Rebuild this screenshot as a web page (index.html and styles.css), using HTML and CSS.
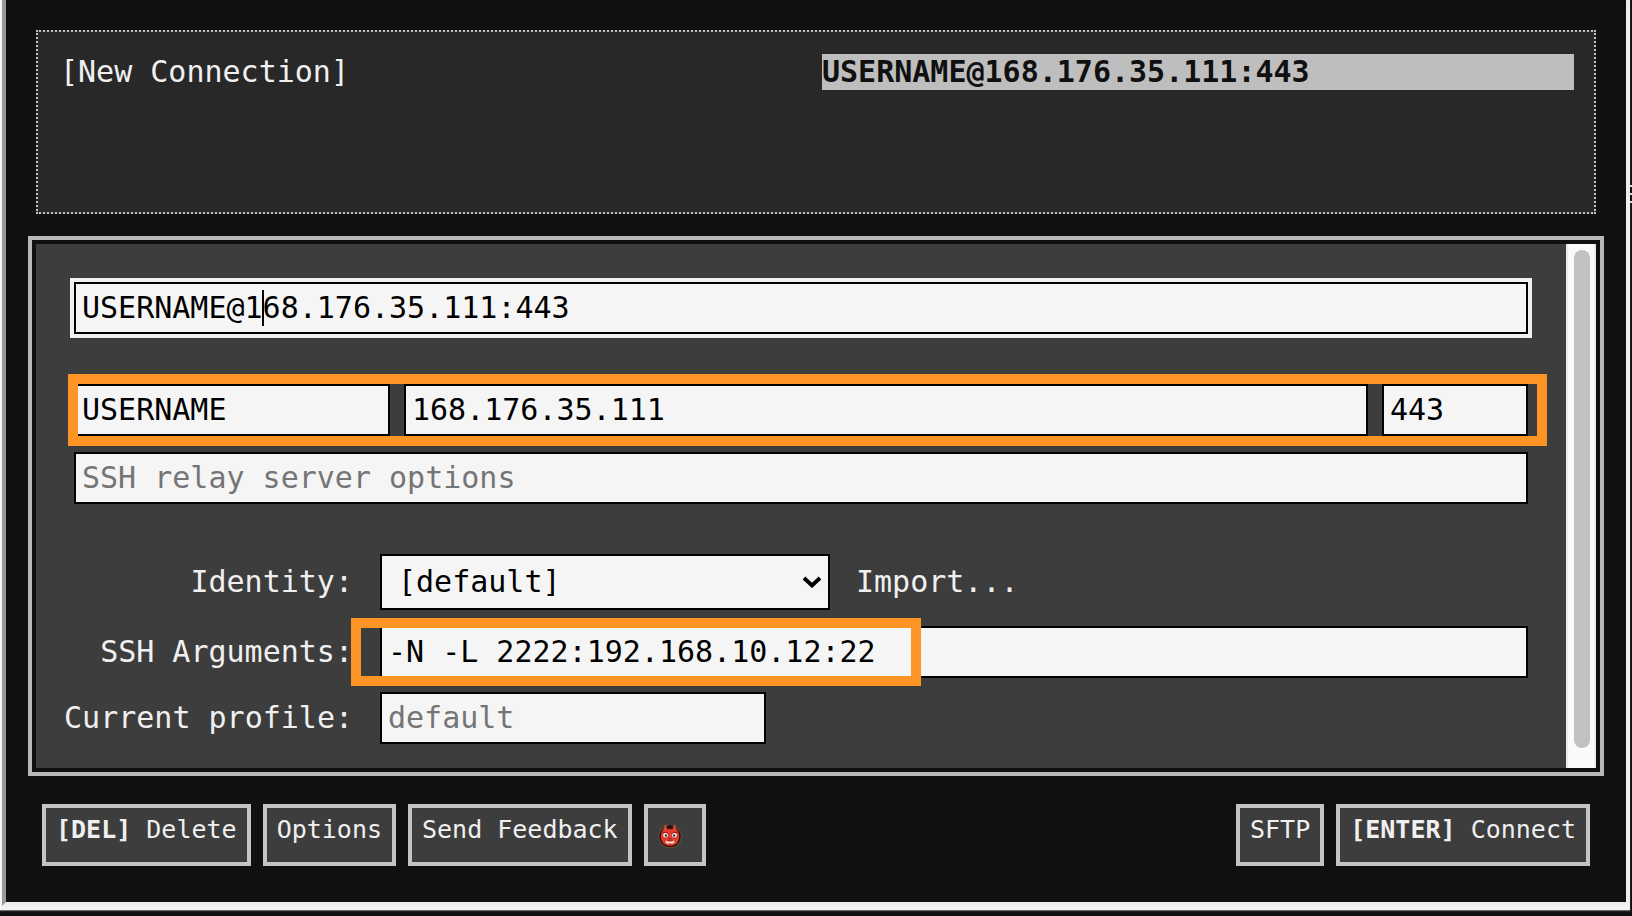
FILE: index.html
```html
<!DOCTYPE html>
<html lang="en">
<head>
<meta charset="utf-8">
<title>Secure Shell</title>
<link rel="stylesheet" href="styles.css">
</head>
<body>
<div class="page">
  <main class="dialog">
    <ul class="shortcuts">
      <li class="shortcut">[New Connection]</li>
      <li class="shortcut selected">USERNAME@168.176.35.111:443</li>
    </ul>
    <section class="panel">
      <form class="form">
        <div class="row description">
          <input class="field focused" type="text" aria-label="Connection" value="USERNAME@168.176.35.111:443">
          <span class="caret"></span>
        </div>
        <div class="row host">
          <input class="field" type="text" aria-label="Username" value="USERNAME">
          <input class="field" type="text" aria-label="Hostname" value="168.176.35.111">
          <input class="field" type="text" aria-label="Port" value="443">
          <span class="mark mark-host"></span>
        </div>
        <div class="row relay">
          <input class="field" type="text" aria-label="SSH relay server options" placeholder="SSH relay server options">
        </div>
        <div class="labelled identity">
          <label for="identity">Identity:</label>
          <div class="identity-controls">
            <div class="select-wrap">
              <select id="identity" class="field select"><option>[default]</option></select>
              <svg class="chevron" viewBox="0 0 20 12" aria-hidden="true"><path d="M2 2 L10 9.5 L18 2" fill="none" stroke="#000" stroke-width="3.8"/></svg>
            </div>
            <button class="import" type="button">Import...</button>
          </div>
        </div>
        <div class="labelled arguments">
          <label for="args">SSH Arguments:</label>
          <div class="row">
            <input id="args" class="field" type="text" value="-N -L 2222:192.168.10.12:22">
            <span class="mark mark-args"></span>
          </div>
        </div>
        <div class="labelled profile">
          <label for="profile">Current profile:</label>
          <input id="profile" class="field profile-field" type="text" placeholder="default">
        </div>
      </form>
      <div class="track"><div class="thumb"></div></div>
    </section>
    <footer class="actions">
      <button class="action" type="button"><span><b>[DEL]</b> Delete</span></button>
      <button class="action" type="button">Options</button>
      <button class="action" type="button">Send Feedback</button>
      <button class="action ogre" type="button" aria-label="Ogre">
        <svg viewBox="0 0 24 24" aria-hidden="true">
          <circle cx="12" cy="12.500" r="11.500" fill="#7a5a3a"/>
          <circle cx="12" cy="12.500" r="10.800" fill="#2b130c"/>
          <path d="M3 10 Q4.500 4 8 4 L16 4 Q19.500 4 21 10 Q22 17.500 17 20.500 Q12 23 7 20.500 Q2 17.500 3 10Z" fill="#e03c2e"/>
          <path d="M6 6 L7 0 L9.300 4.500Z M18 6 L17 0 L14.700 4.500Z" fill="#f0503e"/>
          <path d="M8.500 4.500 Q9 1 12 1 Q15 1 15.500 4.500 L12 5.200Z" fill="#2b130c"/>
          <path d="M4.800 8 L10.200 9.500 M19.200 8 L13.800 9.500" stroke="#8e1c14" stroke-width="1.200"/>
          <circle cx="7.600" cy="11.300" r="2.300" fill="#fff"/><circle cx="16.400" cy="11.300" r="2.300" fill="#fff"/>
          <circle cx="7.900" cy="11.500" r="1.200" fill="#24313c"/><circle cx="16.100" cy="11.500" r="1.200" fill="#24313c"/>
          <path d="M10.500 14 Q12 15.500 13.500 14" fill="none" stroke="#a82219" stroke-width="1.200"/>
          <path d="M7.500 17 Q12 15.500 16.500 17 L16 19.500 Q12 18.500 8 19.500Z" fill="#a82219"/>
          <path d="M7.500 19 L8 16.300 L9.500 17.500 L14.500 17.500 L16 16.300 L16.500 19 L14 19.700 L12 19 L10 19.700Z" fill="#ffe3d6"/>
        </svg>
      </button>
      <span class="spacer"></span>
      <button class="action" type="button">SFTP</button>
      <button class="action" type="button"><span><b>[ENTER]</b> Connect</span></button>
    </footer>
  </main>
</div>
<div class="edge-marks"></div>
</body>
</html>
```
FILE: styles.css
```css
* { box-sizing: border-box; }

body {
  margin: 0;
  min-height: 100vh;
  display: flex;
  flex-direction: column;
  background: #111;
  color: #f0f0f0;
  font: 30px/36px "DejaVu Sans Mono", monospace;
}

.page {
  flex: 1;
  display: flex;
  margin: 0 2px 6px 0;
  border-left: 2px solid #f8f8f8;
  border-bottom: 4px solid #f2f2f2;
  box-shadow: 0 1px 1px #666;
}

.dialog {
  flex: 1;
  min-width: 0;
  display: flex;
  flex-direction: column;
  padding: 30px 22px 36px;
  border: 4px solid #eee;
  border-top: 0;
  border-left-color: #999;
  background: #101010;
}

.shortcuts {
  display: grid;
  grid-template-columns: 1fr 1fr;
  align-content: start;
  column-gap: 12px;
  min-height: 184px;
  margin: 0 8px 22px;
  padding: 22px 20px;
  border: 2px dotted #c2c2c2;
  background: #282828;
  list-style: none;
}

.shortcut { padding-left: 2px; }

.selected {
  padding-left: 0;
  background: #bebebe;
  color: #101010;
  font-weight: bold;
}

.panel {
  flex: 1;
  display: flex;
  padding: 4px;
  border: 4px solid #b8b8b8;
}

.form {
  flex: 1;
  min-width: 0;
  padding: 38px 38px 24px;
  background: #3d3d3d;
}

.row { position: relative; display: flex; }

.field {
  width: 100%;
  min-width: 0;
  height: 52px;
  margin: 0;
  padding: 0 6px 2px;
  border: 2px solid #000;
  border-radius: 0;
  outline: 0;
  background: #f5f5f5;
  color: #000;
  font: inherit;
}

.field::placeholder { color: #757575; opacity: 1; }

.focused { outline: 4px solid #f0f0f0; }

.caret {
  position: absolute;
  left: 188px;
  top: 8px;
  width: 2px;
  height: 36px;
  background: #000;
}

.host {
  display: grid;
  grid-template-columns: 158fr 482fr 73fr;
  gap: 14px;
  margin: 50px 0 16px;
}

.mark {
  position: absolute;
  border: 10px solid #fd9426;
  pointer-events: none;
}

.mark-host { inset: -10px -19px -10px -6px; }
.mark-args { left: -29px; top: -8px; bottom: -8px; width: 570px; }

.labelled {
  display: grid;
  grid-template-columns: 289px 1fr;
  column-gap: 27px;
  align-items: center;
  margin-left: -10px;
}

.labelled label { text-align: right; }

.identity { margin-top: 50px; }
.arguments { margin: 16px 0 14px -10px; }

.identity-controls { display: flex; align-items: center; gap: 26px; }
.select-wrap { position: relative; width: 450px; }

.select {
  display: block;
  height: 56px;
  padding: 0 16px;
  appearance: none;
}

.chevron {
  position: absolute;
  right: 8px;
  top: 22px;
  width: 20px;
  height: 12px;
}

.import {
  padding: 0;
  border: 0;
  background: none;
  color: inherit;
  font: inherit;
}

.profile-field { width: 386px; }

.track {
  width: 30px;
  padding: 6px 4px 20px 6px;
  border: solid #ececec;
  border-width: 0 2px;
  background: #fafafa;
}

.thumb { height: 100%; border-radius: 8px; background: #c1c1c1; }

.actions {
  display: flex;
  gap: 12px;
  margin-top: 28px;
  padding: 0 14px;
}

.action {
  display: flex;
  align-items: flex-start;
  height: 62px;
  padding: 7px 10px;
  border: 4px solid #c4c4c4;
  background: #3d3d3d;
  color: #f0f0f0;
  font: 25px/30px "DejaVu Sans Mono", monospace;
  white-space: pre;
}

.ogre { width: 62px; padding-top: 16px; }
.ogre svg { flex: none; width: 24px; height: 24px; }

.spacer { flex: 1; }

.edge-marks {
  position: absolute;
  right: 0;
  top: 185px;
  width: 2px;
  height: 18px;
  background: repeating-linear-gradient(#ddd 0 2px, #111 2px 8px);
}
```
